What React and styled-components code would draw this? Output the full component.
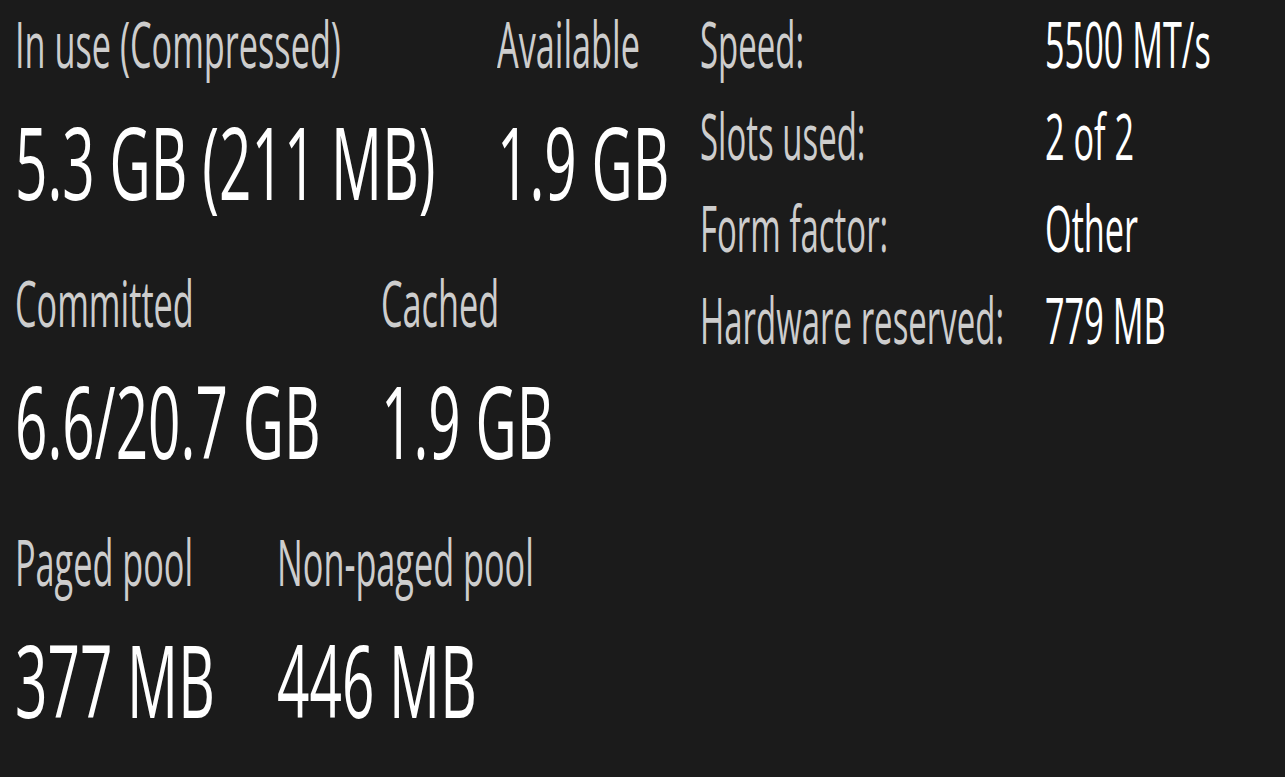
import React from 'react';
import styled, { createGlobalStyle } from 'styled-components';

const GlobalStyle = createGlobalStyle`
    html, body {
        margin: 0;
        padding: 0;
        background: #1b1b1b;
        overflow: clip;
    }
`;

const stats = [
    { cols: '482px auto', items: [['In use (Compressed)', '5.3 GB (211 MB)'], ['Available', '1.9 GB']] },
    { cols: '366px auto', items: [['Committed', '6.6/20.7 GB'], ['Cached', '1.9 GB']] },
    { cols: '262px auto', items: [['Paged pool', '377 MB'], ['Non-paged pool', '446 MB']] },
];

const specs = [
    ['Speed:', '5500 MT/s'],
    ['Slots used:', '2 of 2'],
    ['Form factor:', 'Other'],
    ['Hardware reserved:', '779 MB'],
];

export default function App() {
    return (
        <Panel>
            <GlobalStyle />
            <Stats>
                {stats.map((row) => (
                    <StatRow key={row.items[0][0]} $cols={row.cols}>
                        {row.items.map(([label, value]) => (
                            <Stat key={label}>
                                <Label>{label}</Label>
                                <Value>{value}</Value>
                            </Stat>
                        ))}
                    </StatRow>
                ))}
            </Stats>
            <Specs>
                {specs.map(([label, value]) => (
                    <React.Fragment key={label}>
                        <Label $narrow>{label}</Label>
                        <Label $bright>{value}</Label>
                    </React.Fragment>
                ))}
            </Specs>
        </Panel>
    );
}

const Panel = styled.div`
    width: 100%;
    min-height: 100vh;
    box-sizing: border-box;
    padding: 12px 0 0 15px;
    background: #1b1b1b;
    overflow: clip;
    display: grid;
    grid-template-columns: 685px 1fr;
    align-items: start;
    font-family: "Open Sans", "Noto Sans", sans-serif;
`;

const Stats = styled.div`
    display: flex;
    flex-direction: column;
    gap: 59px;
    min-width: 0;
`;

const StatRow = styled.div`
    display: grid;
    grid-template-columns: ${(p) => p.$cols};
`;

const Stat = styled.div`
    display: flex;
    flex-direction: column;
    gap: 35px;
`;

const Squeezed = styled.div`
    white-space: nowrap;
    width: max-content;
    transform-origin: left center;
    font-weight: 400;
`;

const Label = styled(Squeezed)`
    font-size: 64px;
    line-height: 64px;
    color: ${(p) => (p.$bright ? '#ffffff' : '#cdcdcd')};
    transform: scaleX(${(p) => (p.$narrow ? 0.515 : 0.535)});
`;

const Value = styled(Squeezed)`
    font-size: 101px;
    line-height: 101px;
    color: #ffffff;
    transform: scaleX(0.562);
`;

const Specs = styled.div`
    display: grid;
    grid-template-columns: 345px auto;
    row-gap: 28px;
    min-width: 0;
`;
